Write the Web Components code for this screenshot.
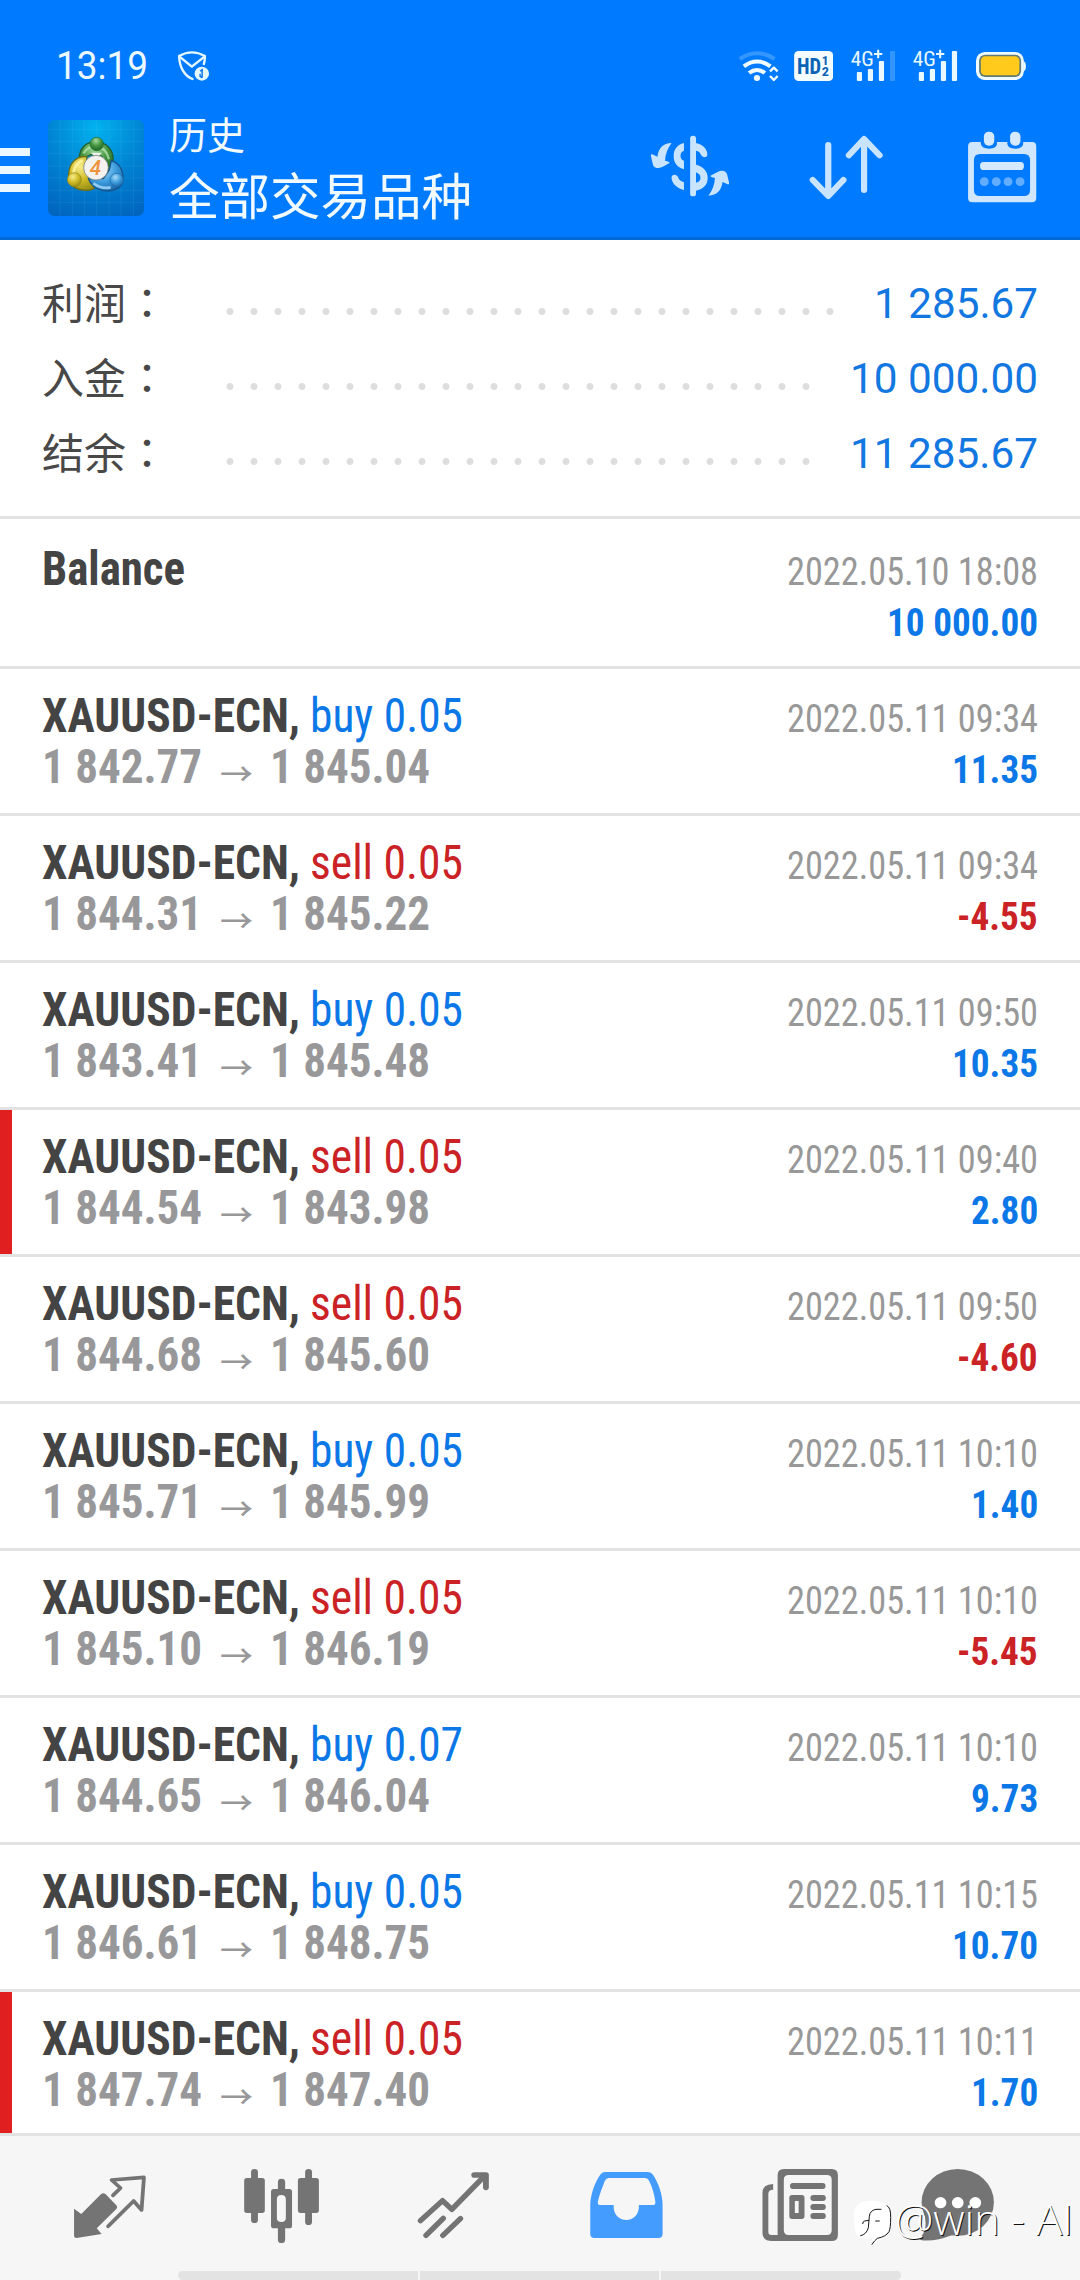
<!DOCTYPE html>
<html lang="zh-CN">
<head>
<meta charset="utf-8">
<title>历史</title>
<style>
html,body{margin:0;padding:0;background:#fff}
body{width:1080px;height:2280px;overflow:hidden;font-family:"Roboto Condensed",Roboto,"Noto Sans CJK SC",sans-serif}
</style>
</head>
<body>
<history-app></history-app>
<script>
const KX = 2.9037;
// Each icon: box in page pixels [x, y, w, h], origin [ox, oy] of its drawing grid, and the markup.
const ICONS = {
  shield: { b:[174,48,38,36], o:[0,0], m:`<g fill="none" stroke="#e6f8ff" stroke-width="7" stroke-linejoin="round" stroke-linecap="round"><path d="M592 192Q595 182 595 168Q557 146 520 168C521 202 536 228 559 237"/><path d="M524 172L557 200L591 172"/></g><circle cx="586" cy="221" r="21" fill="#e6f8ff"/><path d="M581 214L587 209V233M581 221V229L587 233" fill="none" stroke="#0070e8" stroke-width="4"/>` },
  wifi: { b:[738,48,42,36], o:[540,0], m:`<g fill="none" stroke="#effbff" stroke-width="12"><path d="M580 177Q630 142 681 177" opacity=".22"/><path d="M592 199Q630 170 669 199"/><path d="M607 219Q630 201 653 219"/><g stroke-width="7" stroke-linejoin="round"><path d="M668 214L679 203L690 214"/><path d="M668 228L679 240L690 228"/></g></g><circle cx="630" cy="234" r="9" fill="#effbff"/>` },
  hd: { b:[794,48,39,36], o:[540,0], m:`<rect x="738" y="153" width="113" height="90" rx="13" fill="#f4fcff"/><g fill="#0c62b4" font-family="Roboto Condensed,Roboto,sans-serif" font-weight="700"><text x="746" y="222" font-size="66" textLength="70" lengthAdjust="spacingAndGlyphs">HD</text><text x="818" y="195" font-size="40" textLength="20" lengthAdjust="spacingAndGlyphs">1</text><text x="818" y="228" font-size="40" textLength="21" lengthAdjust="spacingAndGlyphs">2</text></g>` },
  sigA: { b:[850,48,46,36], o:[540,0], m:signal(.22) },
  sigB: { b:[912,48,46,36], o:[602,0], m:signal(1) },
  battery: { b:[975,48,52,36], o:[540,0], m:`<rect x="1266" y="156" width="139" height="84" rx="26" fill="#f0fbff"/><path d="M1404 184Q1411 186 1411 199Q1411 212 1404 214Z" fill="#f0fbff"/><rect x="1275" y="164" width="122" height="67" rx="18" fill="#5d7a75"/><rect x="1280" y="169" width="112" height="57" rx="13" fill="#ffca1c"/>` },
  menu: { b:[0,148,30,44], o:[0,0], m:`<path d="M0 444H87V468H0ZM0 498H87V522H0ZM0 552H87V576H0Z" fill="#ebf8ff"/>` },
  currency: { b:[648,130,84,74], o:[540,0], m:`<g fill="#c9e4ff"><rect x="436" y="407" width="17" height="182" rx="8"/><path d="M418 429C398 434 388 449 388 468C388 490 400 503 418 508V482C411 479 408 474 408 467C408 459 412 454 418 452Z"/><path d="M382 535C380 521 398 521 401 532C403 540 410 544 418 547V570C398 565 384 552 382 535Z"/><path d="M453 429C472 433 485 446 486 463C486 475 470 474 466 462C464 456 460 453 453 452Z"/><path d="M453 494C475 500 487 514 487 534C487 556 472 568 453 572V548C462 546 466 541 466 533C466 525 460 520 453 517Z"/><path d="M382 429C357 430 344 445 341 470L326 463Q321 462 322 468L328 494Q332 505 345 504Q355 502 377 488Q374 483 363 482C364 462 370 446 382 429Z"/><path transform="rotate(180 435.5 508)" d="M382 429C357 430 344 445 341 470L326 463Q321 462 322 468L328 494Q332 505 345 504Q355 502 377 488Q374 483 363 482C364 462 370 446 382 429Z"/></g>` },
  sort: { b:[806,130,80,74], o:[540,0], m:`<g fill="none" stroke="#c9e4ff" stroke-width="18" stroke-linecap="round" stroke-linejoin="round"><path d="M837 435V586M792 540L837 588L881 540"/><path d="M941 418V570M897 466L941 417L986 466"/></g>` },
  calendar: { b:[966,130,72,74], o:[540,0], m:`<path fill-rule="evenodd" fill="#cfe6fc" d="M1255 426H1280V432Q1283 446 1304 446Q1325 446 1327 432V426H1357V432Q1359 446 1380 446Q1401 446 1403 432V426H1429Q1441 426 1441 439V594Q1441 607 1428 607H1256Q1243 607 1243 594V439Q1243 426 1255 426ZM1278 462Q1260 462 1260 480V569Q1260 588 1278 588H1405Q1423 588 1423 569V480Q1423 462 1405 462Z"/><g fill="#d6eaff"><rect x="1289" y="395" width="30" height="42" rx="14"/><rect x="1365" y="395" width="30" height="42" rx="14"/><rect x="1278" y="486" width="127" height="24" rx="10"/></g><g fill="#62adff"><circle cx="1290" cy="545" r="13"/><circle cx="1325" cy="545" r="13"/><circle cx="1359" cy="545" r="13"/><circle cx="1394" cy="545" r="13"/></g>` },
  logo: { b:[48,120,96,96], o:[40,110], k:3, m:`<defs><radialGradient id="bg" cx=".5" cy=".08" r="1"><stop offset="0" stop-color="#02b2ef"/><stop offset=".5" stop-color="#0083d2"/><stop offset="1" stop-color="#0064bd"/></radialGradient><radialGradient id="gn" cx=".45" cy=".25" r=".8"><stop offset="0" stop-color="#a5dba0"/><stop offset=".5" stop-color="#43943f"/><stop offset="1" stop-color="#1c6326"/></radialGradient><radialGradient id="ye" cx=".4" cy=".3" r=".8"><stop offset="0" stop-color="#f6ec8c"/><stop offset=".5" stop-color="#d0bb25"/><stop offset="1" stop-color="#8b8514"/></radialGradient><radialGradient id="bl" cx=".4" cy=".3" r=".8"><stop offset="0" stop-color="#a9dbf6"/><stop offset=".5" stop-color="#3d9ddd"/><stop offset="1" stop-color="#155c9e"/></radialGradient></defs>
<rect x="24" y="30" width="288" height="288" rx="20" fill="url(#bg)"/>
<path d="M60 30V318M97 30V318M133 30V318M170 30V318M207 30V318M243 30V318M280 30V318M24 58H312M24 95H312M24 131H312M24 168H312M24 204H312M24 241H312M24 277H312" stroke="#6fd0ff" stroke-width="2" opacity=".17"/>
<g stroke-width="4"><path d="M118 150C116 112 140 96 168 95C200 96 222 122 219 152Q216 176 203 190L186 140L152 134Z" fill="url(#gn)" stroke="#20602c"/><path d="M140 140C112 136 88 158 86 192C82 222 106 245 150 240Q166 236 172 224L140 190Z" fill="url(#ye)" stroke="#6f7019"/><path d="M214 152C242 160 254 190 247 218C238 244 196 250 168 234Q152 224 145 205L190 206L208 180Z" fill="url(#bl)" stroke="#17558f"/></g>
<path d="M130 130Q148 106 168 108Q198 112 207 148" fill="none" stroke="#bfe8b4" stroke-width="7" opacity=".7"/><path d="M100 190Q104 160 128 151" fill="none" stroke="#fff6a5" stroke-width="9" opacity=".8"/><path d="M160 220Q185 238 212 232" fill="none" stroke="#a6dcff" stroke-width="8" opacity=".8"/>
<circle cx="170" cy="102" r="20" fill="url(#gn)" stroke="#1d6a28" stroke-width="2"/><circle cx="103" cy="209" r="21" fill="url(#ye)" stroke="#8f8718" stroke-width="2"/><circle cx="230" cy="210" r="20" fill="url(#bl)" stroke="#1b69ab" stroke-width="2"/>
<path d="M153 128L186 128L169 145Z" fill="#eef5ea"/>
<circle cx="168" cy="173" r="37" fill="#f3f2f0" stroke="#60706c" stroke-width="2"/><text x="149" y="195" font-family="Roboto,sans-serif" font-style="italic" font-weight="500" font-size="62" fill="#ee9440">4</text>` },
  trade: { b:[72,2166,76,80], o:[0,2120], m:`<path fill="#747474" d="M215 266L236 282L293 223Q300 216 307 223L337 255Q343 261 337 268L281 325L295 342L222 354Q215 354 215 347Z"/><path fill="none" stroke="#747474" stroke-width="11" stroke-linejoin="round" stroke-linecap="round" d="M328 226L350 204L324 180L418 172L411 270L388 243L314 319"/>` },
  candles: { b:[242,2166,80,80], o:[0,2120], m:`<g fill="#747474"><rect x="709" y="174" width="60" height="105" rx="8"/><rect x="729" y="147" width="20" height="162" rx="10"/><rect x="865" y="174" width="61" height="105" rx="8"/><rect x="886" y="147" width="20" height="168" rx="10"/><path d="M807 210V186Q807 176 817 176Q828 176 828 186V210ZM807 322V359Q807 369 817 369Q828 369 828 359V322Z"/><path fill-rule="evenodd" d="M795 207H840Q848 207 848 215V317Q848 325 840 325H795Q787 325 787 317V215Q787 207 795 207ZM817 225Q804 225 804 238V294Q804 306 817 306Q830 306 830 294V238Q830 225 817 225Z"/></g>` },
  trend: { b:[416,2166,76,80], o:[0,2120], m:`<g fill="none" stroke="#747474" stroke-width="16" stroke-linecap="round" stroke-linejoin="round"><path d="M1221 302L1285 242L1312 268L1408 167"/><path d="M1377 165H1411V202" stroke-width="17"/><path d="M1237 346L1287 295M1286 346L1337 296"/></g>` },
  inbox: { b:[588,2166,78,80], o:[540,2120], m:`<path fill="#449cff" fill-rule="evenodd" d="M190 156H312Q322 156 327 163C345 190 356 225 356 255V342Q356 354 343 354H158Q146 354 146 342V255C146 225 160 185 176 163Q181 156 190 156ZM200 174H304Q312 174 316 181C326 200 332 225 335 245Q336 255 327 255H287V264C283 312 218 312 214 264V255H175Q167 255 168 245C172 225 180 205 188 183Q192 174 200 174Z"/>` },
  news: { b:[762,2166,78,80], o:[540,2120], m:`<g fill="#747474"><path fill-rule="evenodd" d="M708 147H847Q865 147 865 165V345Q865 363 847 363H672Q646 363 646 338V218Q646 193 677 192V209Q663 209 663 222V336Q663 345 672 345H690V165Q690 147 708 147ZM722 165Q708 165 708 179V331Q708 345 722 345H833Q847 345 847 331V179Q847 165 833 165Z"/><rect x="726" y="189" width="103" height="18" rx="8"/><path fill-rule="evenodd" d="M732 225H760Q768 225 768 233V289Q768 297 760 297H732Q724 297 724 289V233Q724 225 732 225ZM740 243V279H751V243Z"/><rect x="785" y="225" width="45" height="18" rx="9"/><rect x="785" y="252" width="45" height="18" rx="9"/><rect x="785" y="279" width="45" height="18" rx="9"/></g>` },
  chat: { b:[920,2166,80,80], o:[540,2120], m:`<g fill="#747474"><ellipse cx="1213" cy="247" rx="105" ry="100"/><path d="M1112 265Q1130 325 1106 350Q1098 356 1108 361Q1150 365 1195 346L1225 320Z"/></g><g fill="#fff"><circle cx="1163" cy="248" r="17"/><circle cx="1213" cy="248" r="17"/><circle cx="1264" cy="248" r="17"/></g>` },
  brand: { b:[852,2200,42,48], o:[840,2155], k:3, m:`<path d="M70 140Q98 134 126 141Q152 148 153 178Q155 215 150 226Q142 248 118 254L100 268L98 252Q60 254 50 240Q40 220 42 180Q42 146 70 140Z" fill="#fff"/><g fill="none" stroke="#151515" stroke-width="3" stroke-linecap="round"><path d="M141 152Q153 158 152 188Q152 220 147 230Q138 245 112 250Q104 256 96 268"/><path d="M123 163H108Q90 166 88 184L85 218Q80 238 62 242"/><path d="M68 206Q68 199 74 198L86 196M107 198H118"/></g>` }
};
function signal(last) {
  return `<g fill="#e9f9ff"><text x="902" y="197" font-family="Roboto Condensed,Roboto,sans-serif" font-size="59" textLength="67" lengthAdjust="spacingAndGlyphs">4G</text><path d="M970 159H979V149H985V159H994V165H985V175H979V165H970Z"/><rect x="920" y="216" width="15" height="27" rx="3"/><rect x="952" y="207" width="15" height="36" rx="3"/><rect x="984" y="183" width="15" height="60" rx="3"/><rect x="1016" y="153" width="15" height="90" rx="3" opacity="${last}"/></g>`;
}
class Base extends HTMLElement {
  connectedCallback() {
    if (this.shadowRoot) return;
    this.attachShadow({ mode: 'open' }).innerHTML = this.view();
    this.ready();
  }
  ready() {}
}
customElements.define('app-icon', class extends Base {
  view() {
    const { b, o, k = KX, m } = ICONS[this.getAttribute('name')];
    return `<style>:host{display:block;flex:none;width:${b[2]}px;height:${b[3]}px}svg{display:block}</style><svg width="${b[2]}" height="${b[3]}" preserveAspectRatio="none" viewBox="${(b[0]-o[0])*k} ${(b[1]-o[1])*3} ${b[2]*k} ${b[3]*3}">${m}</svg>`;
  }
});
// Single-line text squeezed horizontally to a width (w) or by a factor (scale).
customElements.define('fit-text', class extends Base {
  view() {
    return `<style>:host{display:block;flex:none;white-space:pre}span{display:inline-block;transform-origin:0 50%}</style><span><slot></slot></span>`;
  }
  ready() {
    const s = this.shadowRoot.querySelector('span');
    const n = s.getBoundingClientRect().width;
    const k = this.hasAttribute('w') ? this.getAttribute('w') / n : +this.getAttribute('scale');
    s.style.transform = `scaleX(${k})`;
    this.style.width = n * k + 'px';
  }
});
customElements.define('status-bar', class extends Base {
  view() {
    return `<style>:host{display:flex;height:36px;padding:48px 53px 0 56px;color:#ebf9ff}
    .t{font:400 38px/37px Roboto,sans-serif}.sh{margin-left:26px}.r{display:flex;margin-left:auto}
    .a{margin-left:14px}.b{margin-left:17px}.c{margin-left:16px}.d{margin-left:17px}</style>
    <fit-text class="t" w="92">13:19</fit-text><app-icon class="sh" name="shield"></app-icon>
    <div class="r"><app-icon name="wifi"></app-icon><app-icon class="a" name="hd"></app-icon><app-icon class="b" name="sigA"></app-icon><app-icon class="c" name="sigB"></app-icon><app-icon class="d" name="battery"></app-icon></div>`;
  }
});
customElements.define('title-bar', class extends Base {
  view() {
    return `<style>:host{display:flex;height:153px;border-bottom:3px solid #0069d8;color:#f0faff}
    .m{margin-top:64px}.l{margin:36px 0 0 18px}.t{margin:22px 0 0 25px;font-family:"Noto Sans CJK SC",sans-serif}
    .s{font-size:38px;line-height:54px}.h{font-size:50.5px;line-height:66px}
    .r{display:flex;margin:46px 42px 0 auto}.x{margin-left:74px}.y{margin-left:80px}</style>
    <app-icon class="m" name="menu"></app-icon><app-icon class="l" name="logo"></app-icon>
    <div class="t"><div class="s">历史</div><div class="h">全部交易品种</div></div>
    <div class="r"><app-icon name="currency"></app-icon><app-icon class="x" name="sort"></app-icon><app-icon class="y" name="calendar"></app-icon></div>`;
  }
});
customElements.define('summary-row', class extends Base {
  view() {
    return `<style>:host{display:flex;height:75px;line-height:75px;font-size:42px}
    .k{width:184px;color:#484848;font-family:"Noto Sans CJK SC",sans-serif;font-weight:400;margin-top:-3px;white-space:nowrap}.k i{font:400 42px/75px "Noto Sans CJK TC",sans-serif}
    .d{height:7px;width:${this.getAttribute('dots')*24}px;margin-top:42px;background:radial-gradient(circle at 4px 3.5px,#dedede 3px,transparent 4px) 0 0/24px 7px}
    .v{margin-left:auto;color:#1277e0;font-family:Roboto,sans-serif}</style>
    <div class="k"><slot></slot><i lang="zh-TW">：</i></div><div class="d"></div><fit-text class="v" w="${this.getAttribute('w')}">${this.getAttribute('value')}</fit-text>`;
  }
});
customElements.define('deal-row', class extends Base {
  view() {
    const g = n => this.getAttribute(n), side = g('side'), v = g('value');
    const col = c => c ? '#cb2226' : '#0c77e6';
    return `<style>:host{display:flex;flex:none;justify-content:space-between;box-sizing:border-box;height:${side ? 147 : 150}px;border-top:3px solid #e2e2e2;padding:${side ? 21 : 24}px 42px 0 42px;position:relative;line-height:51px}
    .bar{position:absolute;left:0;top:0;width:12px;height:144px;background:#e02020}
    .l{font-size:48px;font-weight:700}.n,.p{display:flex;height:51px}.n{color:#444}.n .o{font-weight:400;margin-left:10px;color:${col(side === 'sell')}}
    .p{color:#98989a}.ar{font:500 31px/61px "Noto Sans CJK SC",sans-serif;margin:0 17px 0 18px}
    .r{display:flex;flex-direction:column;align-items:flex-end;padding-top:3px;font-size:39.5px}
    .r fit-text{height:51px}.dt{color:#989898}.v{font-weight:700;color:${col(v[0] === '-')}}</style>
    ${g('flag') !== null ? '<div class="bar"></div>' : ''}
    <div class="l"><div class="n">${side ? `<fit-text w="258">XAUUSD-ECN,</fit-text><fit-text class="o" w="153">${side} ${g('lot')}</fit-text>` : '<fit-text w="143">Balance</fit-text>'}</div>
    ${side ? `<div class="p"><fit-text w="160">${g('from')}</fit-text><fit-text class="ar" w="33">→</fit-text><fit-text w="160">${g('to')}</fit-text></div>` : ''}</div>
    <div class="r"><fit-text class="dt" w="251">${g('time')}</fit-text><fit-text class="v" scale=".942">${v}</fit-text></div>`;
  }
});
customElements.define('tab-bar', class extends Base {
  view() {
    return `<style>:host{display:flex;flex-direction:column;flex:none;box-sizing:border-box;height:147px;border-top:3px solid #e2e2e2;background:#f6f6f6;position:relative}
    .i{display:flex;box-sizing:border-box;height:135px;padding:30px 0 0 72px;gap:94px}.q{margin-left:2px}.z{margin-left:-14px}
    .h{display:flex;gap:2px;margin:0 179px 0 178px;height:9px;flex:none}
    .h b{flex:1;background:#e3e3e3}.h b:first-child{border-radius:6px 0 0 6px}.h b:last-child{border-radius:0 6px 6px 0}
    .w{position:absolute;left:852px;top:64px;display:flex;color:#fff}
    .w fit-text{font:300 42px/54px "Open Sans","Noto Sans",sans-serif;text-shadow:1px 1px 0 #111;margin:-8px 0 0 1px}</style>
    <div class="i"><app-icon name="trade"></app-icon><app-icon name="candles"></app-icon><app-icon name="trend"></app-icon><app-icon class="q" name="inbox"></app-icon><app-icon class="q" name="news"></app-icon><app-icon class="z" name="chat"></app-icon></div>
    <div class="h"><b></b><b></b><b></b></div>
    <div class="w"><app-icon name="brand"></app-icon><fit-text w="178">@win - AI</fit-text></div>`;
  }
});
const DEALS = [
  ['buy','0.05','1 842.77','1 845.04','2022.05.11 09:34','11.35'],
  ['sell','0.05','1 844.31','1 845.22','2022.05.11 09:34','-4.55'],
  ['buy','0.05','1 843.41','1 845.48','2022.05.11 09:50','10.35'],
  ['sell','0.05','1 844.54','1 843.98','2022.05.11 09:40','2.80',1],
  ['sell','0.05','1 844.68','1 845.60','2022.05.11 09:50','-4.60'],
  ['buy','0.05','1 845.71','1 845.99','2022.05.11 10:10','1.40'],
  ['sell','0.05','1 845.10','1 846.19','2022.05.11 10:10','-5.45'],
  ['buy','0.07','1 844.65','1 846.04','2022.05.11 10:10','9.73'],
  ['buy','0.05','1 846.61','1 848.75','2022.05.11 10:15','10.70'],
  ['sell','0.05','1 847.74','1 847.40','2022.05.11 10:11','1.70',1]
];
customElements.define('history-app', class extends Base {
  view() {
    return `<style>:host{display:flex;flex-direction:column;width:1080px;height:2280px;overflow:hidden;background:#fff}
    header{flex:none;height:240px;background:#007aff}.s{flex:none;box-sizing:border-box;height:276px;padding:26px 42px 0}
    .l{flex:1;min-height:0;overflow:hidden;display:flex;flex-direction:column}</style>
    <header><status-bar></status-bar><title-bar></title-bar></header>
    <div class="s"><summary-row dots="26" w="164" value="1 285.67">利润</summary-row><summary-row dots="25" w="188" value="10 000.00">入金</summary-row><summary-row dots="25" w="188" value="11 285.67">结余</summary-row></div>
    <div class="l"><deal-row time="2022.05.10 18:08" value="10 000.00"></deal-row>${DEALS.map(d => `<deal-row side="${d[0]}" lot="${d[1]}" from="${d[2]}" to="${d[3]}" time="${d[4]}" value="${d[5]}"${d[6] ? ' flag' : ''}></deal-row>`).join('')}</div>
    <tab-bar></tab-bar>`;
  }
});
</script>
</body>
</html>
